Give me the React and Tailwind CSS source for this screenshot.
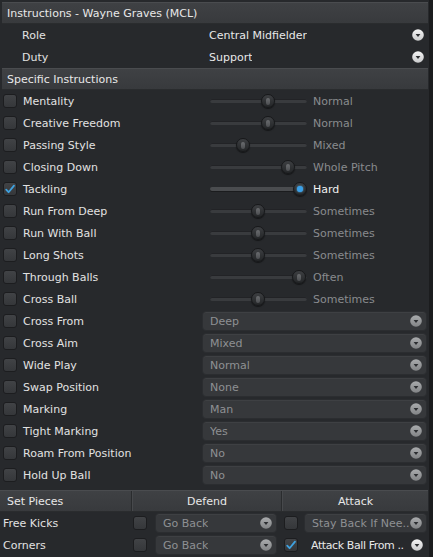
import React from 'react';

const sliderRows = [
  { label: 'Mentality', pos: 58, value: 'Normal' },
  { label: 'Creative Freedom', pos: 58, value: 'Normal' },
  { label: 'Passing Style', pos: 33, value: 'Mixed' },
  { label: 'Closing Down', pos: 78, value: 'Whole Pitch' },
  { label: 'Tackling', pos: 90, value: 'Hard', checked: true },
  { label: 'Run From Deep', pos: 48, value: 'Sometimes' },
  { label: 'Run With Ball', pos: 48, value: 'Sometimes' },
  { label: 'Long Shots', pos: 48, value: 'Sometimes' },
  { label: 'Through Balls', pos: 89, value: 'Often' },
  { label: 'Cross Ball', pos: 48, value: 'Sometimes' },
];

const selectRows = [
  { label: 'Cross From', value: 'Deep' },
  { label: 'Cross Aim', value: 'Mixed' },
  { label: 'Wide Play', value: 'Normal' },
  { label: 'Swap Position', value: 'None' },
  { label: 'Marking', value: 'Man' },
  { label: 'Tight Marking', value: 'Yes' },
  { label: 'Roam From Position', value: 'No' },
  { label: 'Hold Up Ball', value: 'No' },
];

const ArrowBall = ({ light }) => (
  <svg width="12" height="12" viewBox="0 0 12 12" className="shrink-0">
    <defs>
      <linearGradient id={light ? 'ballLight' : 'ballDim'} x1="0" y1="0" x2="0" y2="1">
        <stop offset="0" stopColor={light ? '#f4f4f4' : '#a9abad'} />
        <stop offset="1" stopColor={light ? '#c9cacb' : '#828486'} />
      </linearGradient>
    </defs>
    <circle cx="6" cy="6" r="5.8" fill={`url(#${light ? 'ballLight' : 'ballDim'})`} />
    <path d="M3.6 4.9 L8.4 4.9 L6 7.9 Z" fill="#2c2e31" />
  </svg>
);

const Checkbox = ({ checked }) => (
  <div className="w-[14px] h-[14px] shrink-0 rounded-[3px] border border-[#1c1d1f] bg-gradient-to-b from-[#414346] to-[#35373a] flex items-center justify-center">
    {checked && (
      <svg width="12" height="12" viewBox="0 0 12 12">
        <path d="M2.2 6.6 L4.6 9.2 L10 2.6" fill="none" stroke="#3fa2e0" strokeWidth="1.8" strokeLinecap="round" strokeLinejoin="round" />
      </svg>
    )}
  </div>
);

const Slider = ({ pos, active }) => (
  <div className="relative w-[97px] h-[14px] shrink-0">
    <div className={`absolute left-0 right-0 top-[5px] h-[4px] rounded-full ${active ? 'bg-[#4a4c4f] shadow-[0_1px_0_#1b1c1e]' : 'bg-[#393b3e] shadow-[inset_0_1px_0_#222326]'}`} />
    <div
      className="absolute top-0 w-[14px] h-[14px] rounded-full border border-[#17181a] bg-gradient-to-b from-[#3d3f42] to-[#242628] flex items-center justify-center shadow-[0_1px_1px_rgba(0,0,0,0.5)]"
      style={{ left: pos - 7 }}
    >
      {active ? (
        <div className="w-[6px] h-[6px] rounded-full bg-[#3aa0e8] shadow-[0_0_2px_#5cc0ff]" />
      ) : (
        <div className="w-[4px] h-[7px] rounded-full bg-gradient-to-b from-[#6a6c6f] to-[#4c4e51]" />
      )}
    </div>
  </div>
);

const Select = ({ value, plain, className, textClass = '' }) => (
  <div
    className={`h-[20px] flex items-center justify-between pl-[7px] pr-[4px] rounded-[4px] ${
      plain ? 'text-[#e8e8e8]' : 'bg-[#36383b] border border-[#2b2d30] text-[#8e9093] shadow-[inset_0_1px_0_#3e4043]'
    } ${className}`}
  >
    <span className={`whitespace-nowrap overflow-hidden ${textClass}`}>{value}</span>
    <ArrowBall light={plain} />
  </div>
);

const HeaderBar = ({ children, className }) => (
  <div className={`h-[22px] flex items-center bg-gradient-to-b from-[#3f4144] to-[#383a3d] border-t border-[#4a4c4f] border-b border-b-[#2a2c2e] text-[#e8e8e8] ${className}`}>
    {children}
  </div>
);

export default function App() {
  return (
    <div className="w-[433px] h-[557px] flex bg-[#1b1c1e] overflow-hidden font-['DejaVu_Sans',sans-serif] text-[11px] leading-none">
      <div className="w-[429px] h-full bg-[#27292c] flex flex-col">
        {/* Title */}
        <HeaderBar className="mt-[2px] ml-[2px] w-[426px] pl-[5px]">
          Instructions - Wayne Graves (MCL)
        </HeaderBar>

        {/* Role / Duty */}
        {[
          { label: 'Role', value: 'Central Midfielder' },
          { label: 'Duty', value: 'Support' },
        ].map(r => (
          <div key={r.label} className="h-[22px] flex items-center">
            <span className="w-[202px] pl-[22px] text-[#e2e2e2]">{r.label}</span>
            <Select value={r.value} plain className="w-[226px]" />
          </div>
        ))}

        {/* Specific instructions */}
        <HeaderBar className="ml-[2px] w-[426px] pl-[5px]">Specific Instructions</HeaderBar>

        {sliderRows.map(r => (
          <div key={r.label} className="h-[22px] flex items-center">
            <div className="ml-[3px] mr-[6px]">
              <Checkbox checked={r.checked} />
            </div>
            <span className="w-[187px] text-[#e2e2e2]">{r.label}</span>
            <Slider pos={r.pos} active={r.checked} />
            <span className={`ml-[6px] ${r.checked ? 'text-[#f0f0f0]' : 'text-[#898b8e]'}`}>{r.value}</span>
          </div>
        ))}

        {selectRows.map(r => (
          <div key={r.label} className="h-[22px] flex items-center">
            <div className="ml-[3px] mr-[6px]">
              <Checkbox />
            </div>
            <span className="w-[179px] text-[#e2e2e2]">{r.label}</span>
            <Select value={r.value} className="w-[225px]" />
          </div>
        ))}

        {/* Set pieces */}
        <HeaderBar className="mt-[4px] w-[428px]">
          <div className="w-[132px] pl-[7px] h-full flex items-center border-r border-[#2a2c2e]">Set Pieces</div>
          <div className="w-[150px] h-full flex items-center justify-center border-l border-[#47494c] border-r border-r-[#2a2c2e]">Defend</div>
          <div className="flex-1 h-full flex items-center justify-center border-l border-[#47494c]">Attack</div>
        </HeaderBar>

        {[
          { label: 'Free Kicks', defend: 'Go Back', attack: 'Stay Back If Nee..', attackOn: false },
          { label: 'Corners', defend: 'Go Back', attack: 'Attack Ball From ..', attackOn: true },
        ].map(r => (
          <div key={r.label} className="h-[22px] flex items-center">
            <span className="w-[133px] pl-[3px] text-[#e2e2e2]">{r.label}</span>
            <Checkbox />
            <Select value={r.defend} className="ml-[8px] w-[122px]" />
            <div className="ml-[7px]">
              <Checkbox checked={r.attackOn} />
            </div>
            <Select
              value={r.attack}
              plain={r.attackOn}
              textClass={r.attackOn ? 'tracking-[-0.4px]' : ''}
              className="ml-[6px] w-[123px]"
            />
          </div>
        ))}
      </div>
    </div>
  );
}
